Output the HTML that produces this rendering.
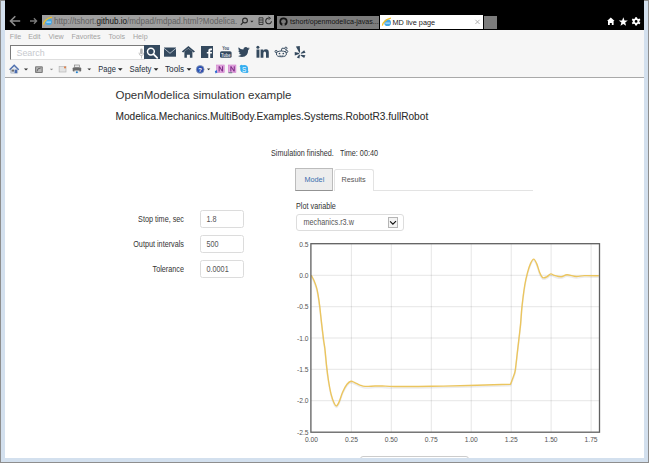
<!DOCTYPE html>
<html><head><meta charset="utf-8">
<style>
*{box-sizing:border-box}
html,body{margin:0;padding:0;width:649px;height:463px;overflow:hidden;background:#fff;font-family:"Liberation Sans",sans-serif}
.a{position:absolute;white-space:nowrap}
.yl{position:absolute;left:280px;width:28.5px;text-align:right;font-size:6.7px;line-height:9px;color:#545454}
.xl{position:absolute;top:434.5px;width:40px;text-align:center;font-size:6.7px;line-height:9px;color:#545454}
.t{color:#333;font-size:7.25px;line-height:9px;transform:scaleY(1.13);transform-origin:0 7px}
.inp{position:absolute;left:200px;width:44px;height:17.5px;border:1px solid #dcdcdc;border-radius:2.5px;background:#fff}
.inp span{position:absolute;left:5.5px;top:3px;font-size:7.25px;line-height:9px;color:#555;transform:scaleY(1.13);transform-origin:0 7px}
.lab{position:absolute;left:100px;width:84px;text-align:right;font-size:7.25px;line-height:9px;color:#333;transform:scaleY(1.13);transform-origin:0 7px}
.mn{position:absolute;top:32.5px;font-size:7.1px;line-height:9px;color:#a3a3a3}
.cb{position:absolute;top:65px;font-size:7.6px;line-height:9px;color:#27303c;transform:scaleY(1.1);transform-origin:0 7px}
</style></head><body>
<div class="a" style="left:0;top:0;width:649px;height:463px;background:#8e8e8e"></div>
<div class="a" style="left:1px;top:1px;width:647px;height:461px;background:#d3e0ee"></div>
<div class="a" style="left:5px;top:0;width:639px;height:30px;background:#000"></div>
<div class="a" style="left:5px;top:30px;width:639px;height:47px;background:#f6f6f6"></div>
<div class="a" style="left:5px;top:77px;width:639px;height:1px;background:#a9a9a9"></div>
<div class="a" style="left:5px;top:78px;width:639px;height:380px;background:#fff"></div>

<div class="a" style="left:42px;top:15px;width:232px;height:13px;background:#9f9f9f"></div>
<div class="a" style="left:54px;top:17.4px;font-size:8.07px;line-height:9px;color:#626262;transform:scaleY(1.1);transform-origin:0 7px">http://tshort.<span style="color:#151515">github.io</span>/mdpad/mdpad.html?Modelica.</div>
<div class="a" style="left:277px;top:15.6px;width:102px;height:13.2px;background:#7c7c7c"></div>
<div class="a" style="left:290px;top:18.2px;font-size:7.1px;line-height:9px;color:#151515;transform:scaleY(1.1);transform-origin:0 7px">tshort/openmodelica-javas...</div>
<div class="a" style="left:380px;top:15px;width:103px;height:14px;background:#fff"></div>
<div class="a" style="left:392.5px;top:18px;font-size:7.3px;line-height:9px;color:#222;transform:scaleY(1.1);transform-origin:0 7px">MD live page</div>
<div class="a" style="left:483.6px;top:15.6px;width:13.3px;height:13.2px;background:#7c7c7c"></div>

<div class="mn" style="left:9.8px">File</div>
<div class="mn" style="left:28.3px">Edit</div>
<div class="mn" style="left:48.5px">View</div>
<div class="mn" style="left:71.4px">Favorites</div>
<div class="mn" style="left:108.5px">Tools</div>
<div class="mn" style="left:133px">Help</div>

<div class="a" style="left:10px;top:45px;width:135px;height:14.5px;background:#fff;border:1px solid #7a7a7a;border-right:none;border-bottom-color:#dedede"></div>
<div class="a" style="left:16.5px;top:47.8px;font-size:8.9px;line-height:10px;color:#c6c9ce">Search</div>

<div class="cb" style="left:98.3px;font-size:7.5px">Page</div>
<div class="cb" style="left:129.6px;font-size:7.7px">Safety</div>
<div class="cb" style="left:165px;font-size:8.2px">Tools</div>

<svg class="a" style="left:0;top:0" width="649" height="80" viewBox="0 0 649 80">
<!-- back arrow -->
<g stroke="#8c8c8c" stroke-width="1.6" fill="none" stroke-linecap="butt">
<path d="M20.2 21 H10.5 M15.3 16.2 L10.5 21 L15.3 25.8"/>
</g>
<g stroke="#7a7a7a" stroke-width="1.3" fill="none">
<path d="M36.6 21 H30 M33.9 18.3 L36.6 21 L33.9 23.7"/>
</g>
<!-- IE icon in address bar -->
<g>
<circle cx="48.6" cy="21.7" r="3.4" fill="#45a8e6"/>
<rect x="46.3" y="21.6" width="4.6" height="1" fill="#cdeafc"/>
<path d="M43.4 24.6 Q44.4 19.1 51.9 17.2" stroke="#f3c024" stroke-width="1.25" fill="none"/>
</g>
<!-- address bar icons -->
<g stroke="#2a2a2a" stroke-width="1.1" fill="none">
<circle cx="245" cy="20.5" r="2.4"/><path d="M243.4 22.2 L240.8 24.8"/>
<path d="M259 17.8 H263 V24.5 H259 Z M259 20 H263 M259 22.3 H263" stroke="#333" stroke-width="0.9"/>
<path d="M271.5 21.2 A2.9 2.9 0 1 1 269.3 18.1" /><path d="M268.6 16.8 L270.6 18.3 L268.6 19.6" stroke-width="0.9"/>
</g>
<path d="M250.3 20.8 L253.5 20.8 L251.9 22.6 Z" fill="#2a2a2a"/>
<!-- github icon -->
<g transform="translate(279.3,17.5)">
<circle cx="4.2" cy="4.2" r="4.1" fill="#111"/>
<circle cx="4.2" cy="4.1" r="2.4" fill="#7a7a7a"/>
<path d="M3 6.2 V8.4 H5.4 V6.2 Z" fill="#7a7a7a"/>
</g>
<!-- IE icon in tab -->
<g>
<circle cx="387.6" cy="22.7" r="3.4" fill="#45a8e6"/>
<rect x="385.3" y="22.6" width="4.6" height="1" fill="#cdeafc"/>
<path d="M382.4 25.6 Q383.4 20.1 390.9 18.2" stroke="#f3c024" stroke-width="1.25" fill="none"/>
</g>
<path d="M475.4 19.8 L479.6 24 M479.6 19.8 L475.4 24" stroke="#a5a5a5" stroke-width="0.85"/>
<!-- right white icons -->
<g fill="#fff">
<path d="M610.8 17.6 L614.6 21.1 L613.6 21.1 L613.6 25 L611.8 25 L611.8 22.9 L609.8 22.9 L609.8 25 L608 25 L608 21.1 L607 21.1 Z"/>
<path d="M623.3 17.3 L624.5 20.5 L627.8 20.6 L625.2 22.6 L626.1 25.8 L623.3 23.9 L620.5 25.8 L621.4 22.6 L618.8 20.6 L622.1 20.5 Z"/>
</g>
<g transform="translate(636.1,21.4)">
<path fill="#fff" fill-rule="evenodd" d="M-0.9 -4.2 H0.9 L1.2 -2.9 L2.2 -2.3 L3.5 -2.8 L4.3 -1.3 L3.3 -0.5 V0.5 L4.3 1.3 L3.5 2.8 L2.2 2.3 L1.2 2.9 L0.9 4.2 H-0.9 L-1.2 2.9 L-2.2 2.3 L-3.5 2.8 L-4.3 1.3 L-3.3 0.5 V-0.5 L-4.3 -1.3 L-3.5 -2.8 L-2.2 -2.3 L-1.2 -2.9 Z M1.4 0 A1.4 1.4 0 1 0 -1.4 0 A1.4 1.4 0 1 0 1.4 0 Z"/>
</g>

<!-- search button -->
<rect x="144" y="45" width="16" height="14" fill="#34495e"/>
<circle cx="150.9" cy="51.6" r="3.4" fill="none" stroke="#fff" stroke-width="1.5"/>
<path d="M153.4 54.1 L157.2 57.9" stroke="#fff" stroke-width="1.8" stroke-linecap="round"/>
<!-- mic -->
<g>
<rect x="140.1" y="48.6" width="2.6" height="5.6" rx="1.3" fill="#b5b5b5"/>
<path d="M139 52.6 Q139 55.6 141.4 55.6 Q143.8 55.6 143.8 52.6" stroke="#b5b5b5" stroke-width="0.8" fill="none"/>
<rect x="141" y="55.4" width="0.8" height="3" fill="#b5b5b5"/>
</g>
<!-- social icons -->
<g fill="#34495e">
<rect x="164" y="47.5" width="12" height="9.2"/>
<path d="M164 48.3 L170 53.3 L176 48.3" stroke="#c5ced8" stroke-width="0.85" fill="none"/>
<path d="M188.4 46 L195 51.6 L193.6 52.6 L188.4 48.2 L183.2 52.6 L181.8 51.6 Z"/>
<path d="M184.4 51.5 L188.4 48.6 L192.4 51.5 V57.8 H189.9 V54.8 H186.9 V57.8 H184.4 Z"/>
<rect x="201" y="46" width="12" height="12"/>
<path d="M208.3 58 V53.6 H206.8 V51.9 H208.3 V50.6 Q208.3 48.5 210.5 48.5 H212 V50.2 H211 Q210.2 50.2 210.2 51 V51.9 H212 L211.8 53.6 H210.2 V58 Z" fill="#fff"/>
<text x="222.3" y="50.4" font-family="Liberation Sans" font-size="5.6" font-weight="bold" textLength="6.8" lengthAdjust="spacingAndGlyphs" fill="#34495e">You</text>
<rect x="220" y="51.2" width="11.6" height="6.6" rx="1.6"/>
<text x="221" y="56.6" font-family="Liberation Sans" font-size="5.4" font-weight="bold" textLength="9.6" lengthAdjust="spacingAndGlyphs" fill="#d5dce4">Tube</text>
<path d="M249.8 48.2 Q249 48.6 248.3 48.7 Q249.1 48.2 249.4 47.3 Q248.6 47.8 247.8 47.9 Q246.9 47 245.7 47 Q243.4 47 243.3 49.6 Q240.4 49.4 238.6 47.3 Q237.7 49.2 239.4 50.7 Q238.8 50.7 238.3 50.4 Q238.4 52.3 240.2 52.9 Q239.6 53.1 239 53 Q239.6 54.6 241.4 54.8 Q239.9 56 237.9 55.9 Q239.8 57 242 57 Q248 57 248.2 50.1 Q249.2 49.3 249.8 48.2 Z"/>
<circle cx="257.9" cy="47.3" r="1.5"/>
<rect x="256.5" y="49.5" width="2.9" height="8.2"/>
<path d="M260.6 49.5 H263.3 V50.7 Q264.2 49.3 266 49.3 Q268.8 49.3 268.8 52.6 V57.7 H266 V53.2 Q266 51.6 264.8 51.6 Q263.4 51.6 263.4 53.4 V57.7 H260.6 Z"/>
<g fill="none" stroke="#34495e" stroke-width="0.95">
<ellipse cx="281.4" cy="53.9" rx="5" ry="2.85"/>
<circle cx="276.1" cy="51.5" r="1.1"/><circle cx="286.7" cy="51.5" r="1.1"/>
<circle cx="285.9" cy="48.3" r="1.15"/>
<path d="M281.2 51 L282 48.2 L284.7 48.4"/>
<path d="M279.4 55.6 Q281.4 56.6 283.4 55.6" stroke-width="0.7"/>
</g>
<circle cx="279.5" cy="53.5" r="0.85"/><circle cx="283.3" cy="53.5" r="0.85"/>
<path d="M295.9 46.6 L299.8 46.0 L300.1 52.6 L299.3 52.7 Z"/>
<path d="M294.7 51.9 L299.2 53.1 L299.2 53.9 L294.8 55.4 Z"/>
<path d="M300.8 52.9 L304.2 50.2 L305.5 52.7 L301 53.7 Z"/>
<path d="M299.3 54.6 L300 55.1 L299.4 58.4 L296.8 57.4 Z"/>
<path d="M300.9 54.7 L305.4 55.3 L304.2 57.9 L300.5 55.4 Z"/>

<!-- cmd bar icons -->
<path d="M10.8 69.2 L14.2 65.8 L17.6 69.2 V73.1 H10.8 Z" fill="#e2e6ec" stroke="#8a9ab0" stroke-width="0.6"/>
<path d="M9.6 69.8 L14.2 65.2 L18.8 69.8" stroke="#4f70b0" stroke-width="1.3" fill="none"/>
<rect x="11.6" y="69.6" width="2.4" height="2" fill="#6a6a6a"/>
<rect x="14.6" y="69.6" width="2.4" height="3.5" fill="#4a6bb0"/>
<path d="M23.9 68.6 H28.1 L26 70.4 Z" fill="#333"/>
<rect x="35" y="66.2" width="7.8" height="6.9" rx="1" fill="#7c7c7c"/>
<rect x="36.2" y="67.3" width="5.4" height="4.7" fill="#b8b8b8"/>
<path d="M37 71.5 Q37 68 40.8 68" stroke="#555" stroke-width="0.8" fill="none"/>
<path d="M49.8 68.8 H53.2 L51.5 70.3 Z" fill="#8a8a8a"/>
<rect x="59.1" y="66.5" width="6.9" height="5.5" fill="#e4e4e4" stroke="#b0b0b0" stroke-width="0.6"/>
<rect x="64.2" y="66.5" width="1.6" height="1.8" fill="#e07030"/>
<rect x="74.5" y="65" width="5" height="2.5" fill="#e8e8e8" stroke="#777" stroke-width="0.6"/>
<rect x="72.7" y="67.5" width="8.5" height="4" rx="0.8" fill="#6a6a6a"/>
<rect x="74.4" y="70.5" width="5" height="2.6" fill="#e8e8e8"/>
<circle cx="76.9" cy="72.3" r="1" fill="#1a7fd0"/>
<path d="M87.4 68.6 H91.2 L89.3 70.3 Z" fill="#333"/>
<path d="M117.9 68.3 H122.6 L120.25 70.8 Z" fill="#222"/>
<path d="M153.7 68.3 H158.4 L156.05 70.8 Z" fill="#222"/>
<path d="M186.6 68.3 H191.4 L189 70.8 Z" fill="#222"/>
<circle cx="200.2" cy="69.4" r="3.9" fill="#2c4fb0" stroke="#8fa0b8" stroke-width="0.8"/>
<text x="200.2" y="71.6" font-family="Liberation Sans" font-size="6" font-weight="bold" text-anchor="middle" fill="#fff">?</text>
<path d="M207 68.6 H210.3 L208.65 70.3 Z" fill="#333"/>
<rect x="216.6" y="65" width="7.6" height="7.5" fill="#e3a8df" stroke="#d07ccc" stroke-width="0.6"/>
<path d="M218.6 71.6 V66.2 H219.8 L222 69.8 V66.2 H223.1 V71.6 H221.9 L219.7 68 V71.6 Z" fill="#80308a"/>
<path d="M214.8 71.2 L216.8 70 L217.3 72.6 L215.6 73.4 Z" fill="#2f6fd0"/>
<rect x="228.3" y="65" width="7.6" height="7.5" fill="#e3a8df" stroke="#d07ccc" stroke-width="0.6"/>
<path d="M230.3 71.6 V66.2 H231.5 L233.7 69.8 V66.2 H234.8 V71.6 H233.6 L231.4 68 V71.6 Z" fill="#80308a"/>
<rect x="228.6" y="72" width="3.6" height="1.3" fill="#7d8894"/>
<path d="M240.2 68.8 A4 4 0 0 1 244.2 64.9 A4 4 0 0 1 248.1 68.9 A4 4 0 0 1 244.1 72.8 A4 4 0 0 1 240.2 68.8 Z" fill="#35aef0"/>
<circle cx="241.4" cy="66.2" r="1.5" fill="#35aef0"/><circle cx="246.9" cy="71.5" r="1.5" fill="#35aef0"/>
<text x="244.2" y="71.6" font-family="Liberation Sans" font-size="6.4" text-anchor="middle" fill="#fff">S</text>
</g>
</svg>


<div class="a" style="left:115.5px;top:88.5px;font-size:11.52px;line-height:13px;color:#333">OpenModelica simulation example</div>
<div class="a" style="left:115.5px;top:111.4px;font-size:10.15px;line-height:12px;color:#2a2a2a;-webkit-text-stroke:0.06px #2a2a2a">Modelica.Mechanics.MultiBody.Examples.Systems.RobotR3.fullRobot</div>
<div class="a t" style="left:271px;top:148.6px">Simulation finished.</div>
<div class="a t" style="left:340px;top:148.6px">Time: 00:40</div>

<div class="a" style="left:373.5px;top:189.5px;width:159.5px;height:1px;background:#e3e3e3"></div>
<div class="a" style="left:295px;top:168px;width:38px;height:23px;background:#ededed;border:1px solid #bcbcbc;border-bottom-color:#939393"></div>
<div class="a t" style="left:304.5px;top:175.3px;color:#3a6eae;transform:none">Model</div>
<div class="a" style="left:333.5px;top:168.5px;width:40.5px;height:22px;background:#fff;border:1px solid #e3e3e3;border-bottom:none;border-radius:2.5px 2.5px 0 0"></div>
<div class="a t" style="left:341.5px;top:175.3px;color:#555;transform:none">Results</div>

<div class="lab" style="top:214.7px">Stop time, sec</div>
<div class="lab" style="top:239.7px">Output intervals</div>
<div class="lab" style="top:264.7px">Tolerance</div>
<div class="inp" style="top:210px"><span style="top:4.1px">1.8</span></div>
<div class="inp" style="top:235.2px"><span style="top:4.1px">500</span></div>
<div class="inp" style="top:260.4px"><span style="top:3.4px">0.0001</span></div>

<div class="a t" style="left:296px;top:201.5px">Plot variable</div>
<div class="a" style="left:296px;top:213.5px;width:108px;height:17px;border:1px solid #ddd;border-radius:3px;background:#fff"></div>
<div class="a t" style="left:303.5px;top:217.5px;color:#555">mechanics.r3.w</div>
<div class="a" style="left:387.5px;top:217px;width:10.5px;height:10.5px;border:1px solid #b5b5b5;background:#f4f4f4"></div>
<svg class="a" style="left:387.5px;top:217.5px" width="11" height="10"><path d="M2.1 3.4 L4.9 6.2 L8 3.1" stroke="#111" stroke-width="1.15" fill="none"/></svg>

<svg class="a" style="left:0;top:0" width="649" height="463" viewBox="0 0 649 463">
<g stroke="rgba(84,84,84,0.15)" stroke-width="1" fill="none"><line x1="351.4" y1="244" x2="351.4" y2="432"/><line x1="391.3" y1="244" x2="391.3" y2="432"/><line x1="431.3" y1="244" x2="431.3" y2="432"/><line x1="471.2" y1="244" x2="471.2" y2="432"/><line x1="511.2" y1="244" x2="511.2" y2="432"/><line x1="551.1" y1="244" x2="551.1" y2="432"/><line x1="591.1" y1="244" x2="591.1" y2="432"/><line x1="311" y1="275.3" x2="599.5" y2="275.3"/><line x1="311" y1="306.7" x2="599.5" y2="306.7"/><line x1="311" y1="338.0" x2="599.5" y2="338.0"/><line x1="311" y1="369.3" x2="599.5" y2="369.3"/><line x1="311" y1="400.7" x2="599.5" y2="400.7"/></g>
<path d="M311.3 275.3 C311.75 276.18 313.10 278.47 314.0 280.6 C314.90 282.73 316.00 285.58 316.7 288.1 C317.40 290.62 317.70 292.68 318.2 295.7 C318.70 298.72 319.20 302.18 319.7 306.2 C320.20 310.22 320.57 314.27 321.2 319.8 C321.83 325.33 322.88 334.57 323.5 339.4 C324.12 344.23 324.38 344.35 324.9 348.8 C325.42 353.25 326.02 360.90 326.6 366.1 C327.18 371.30 327.67 375.38 328.4 380.0 C329.13 384.62 330.03 389.92 331.0 393.8 C331.97 397.68 333.27 401.28 334.2 403.3 C335.13 405.32 335.77 406.18 336.6 405.9 C337.43 405.62 338.18 403.92 339.2 401.6 C340.22 399.28 341.40 394.88 342.7 392.0 C344.00 389.12 345.62 386.08 347.0 384.3 C348.38 382.52 349.70 381.58 351.0 381.3 C352.30 381.02 353.30 381.97 354.8 382.6 C356.30 383.23 358.28 384.47 360.0 385.1 C361.72 385.73 362.60 386.25 365.1 386.4 C367.60 386.55 372.13 386.07 375.0 386.0 C377.87 385.93 379.02 385.92 382.3 386.0 C385.58 386.08 386.48 386.45 394.7 386.5 C402.92 386.55 419.28 386.47 431.6 386.3 C443.92 386.13 455.45 385.83 468.6 385.5 C481.75 385.17 503.52 384.50 510.5 384.3 C511.08 382.73 513.18 377.40 514.0 374.9 C514.82 372.40 514.82 373.28 515.4 369.3 C515.98 365.32 516.90 356.20 517.5 351.0 C518.10 345.80 518.48 342.62 519.0 338.1 C519.52 333.58 520.10 329.18 520.6 323.9 C521.10 318.62 521.30 312.88 522.0 306.4 C522.70 299.92 523.88 290.63 524.8 285.0 C525.72 279.37 526.55 276.17 527.5 272.6 C528.45 269.03 529.47 265.85 530.5 263.6 C531.53 261.35 532.67 259.10 533.7 259.1 C534.73 259.10 535.70 261.35 536.7 263.6 C537.70 265.85 538.70 270.27 539.7 272.6 C540.70 274.93 541.52 276.90 542.7 277.6 C543.88 278.30 545.45 277.42 546.8 276.8 C548.15 276.18 549.55 274.13 550.8 273.9 C552.05 273.67 552.57 274.92 554.3 275.4 C556.03 275.88 559.08 276.90 561.2 276.8 C563.32 276.70 564.50 274.85 567.0 274.8 C569.50 274.75 573.32 276.37 576.2 276.5 C579.08 276.63 580.53 275.72 584.3 275.6 C588.07 275.48 596.38 275.77 598.8 275.8" fill="none" stroke="rgba(40,40,70,0.09)" stroke-width="1.5" transform="translate(0,1.5)"/>
<path d="M311.3 275.3 C311.75 276.18 313.10 278.47 314.0 280.6 C314.90 282.73 316.00 285.58 316.7 288.1 C317.40 290.62 317.70 292.68 318.2 295.7 C318.70 298.72 319.20 302.18 319.7 306.2 C320.20 310.22 320.57 314.27 321.2 319.8 C321.83 325.33 322.88 334.57 323.5 339.4 C324.12 344.23 324.38 344.35 324.9 348.8 C325.42 353.25 326.02 360.90 326.6 366.1 C327.18 371.30 327.67 375.38 328.4 380.0 C329.13 384.62 330.03 389.92 331.0 393.8 C331.97 397.68 333.27 401.28 334.2 403.3 C335.13 405.32 335.77 406.18 336.6 405.9 C337.43 405.62 338.18 403.92 339.2 401.6 C340.22 399.28 341.40 394.88 342.7 392.0 C344.00 389.12 345.62 386.08 347.0 384.3 C348.38 382.52 349.70 381.58 351.0 381.3 C352.30 381.02 353.30 381.97 354.8 382.6 C356.30 383.23 358.28 384.47 360.0 385.1 C361.72 385.73 362.60 386.25 365.1 386.4 C367.60 386.55 372.13 386.07 375.0 386.0 C377.87 385.93 379.02 385.92 382.3 386.0 C385.58 386.08 386.48 386.45 394.7 386.5 C402.92 386.55 419.28 386.47 431.6 386.3 C443.92 386.13 455.45 385.83 468.6 385.5 C481.75 385.17 503.52 384.50 510.5 384.3 C511.08 382.73 513.18 377.40 514.0 374.9 C514.82 372.40 514.82 373.28 515.4 369.3 C515.98 365.32 516.90 356.20 517.5 351.0 C518.10 345.80 518.48 342.62 519.0 338.1 C519.52 333.58 520.10 329.18 520.6 323.9 C521.10 318.62 521.30 312.88 522.0 306.4 C522.70 299.92 523.88 290.63 524.8 285.0 C525.72 279.37 526.55 276.17 527.5 272.6 C528.45 269.03 529.47 265.85 530.5 263.6 C531.53 261.35 532.67 259.10 533.7 259.1 C534.73 259.10 535.70 261.35 536.7 263.6 C537.70 265.85 538.70 270.27 539.7 272.6 C540.70 274.93 541.52 276.90 542.7 277.6 C543.88 278.30 545.45 277.42 546.8 276.8 C548.15 276.18 549.55 274.13 550.8 273.9 C552.05 273.67 552.57 274.92 554.3 275.4 C556.03 275.88 559.08 276.90 561.2 276.8 C563.32 276.70 564.50 274.85 567.0 274.8 C569.50 274.75 573.32 276.37 576.2 276.5 C579.08 276.63 580.53 275.72 584.3 275.6 C588.07 275.48 596.38 275.77 598.8 275.8" fill="none" stroke="#ebc55e" stroke-width="1.4" stroke-linejoin="round"/>
<rect x="310.9" y="243.7" width="288.6" height="188.5" fill="none" stroke="#606060" stroke-width="1.3"/>
</svg>
<div class="yl" style="top:239.5px">0.5</div><div class="yl" style="top:270.8px">0.0</div><div class="yl" style="top:302.2px">-0.5</div><div class="yl" style="top:333.5px">-1.0</div><div class="yl" style="top:364.8px">-1.5</div><div class="yl" style="top:396.2px">-2.0</div><div class="yl" style="top:427.5px">-2.5</div>
<div class="xl" style="left:291.4px">0.00</div><div class="xl" style="left:331.4px">0.25</div><div class="xl" style="left:371.3px">0.50</div><div class="xl" style="left:411.3px">0.75</div><div class="xl" style="left:451.2px">1.00</div><div class="xl" style="left:491.2px">1.25</div><div class="xl" style="left:531.1px">1.50</div><div class="xl" style="left:571.1px">1.75</div>

<div class="a" style="left:359.8px;top:456px;width:109px;height:10px;border:1px solid #ccc;border-radius:3px;background:#fff"></div>
<div class="a" style="left:1px;top:458px;width:647px;height:4px;background:#d3e0ee"></div>
<div class="a" style="left:0;top:462px;width:649px;height:1px;background:#8e8e8e"></div>
</body></html>
